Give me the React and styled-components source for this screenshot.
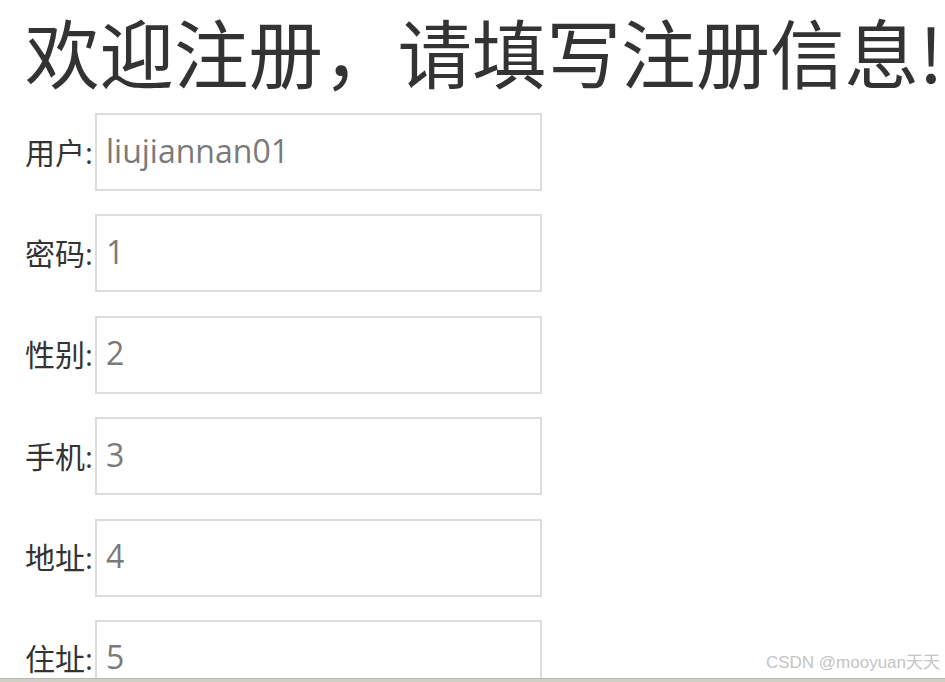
import React from "react";
import styled, { createGlobalStyle } from "styled-components";

const Global = createGlobalStyle`
  html, body { margin: 0; padding: 0; background: #fff; overflow: hidden; }
  body { font-family: "Open Sans", "Noto Sans CJK SC", sans-serif; color: #333; }
`;

const Viewport = styled.div`
  position: relative;
  width: 945px;
  height: 682px;
  overflow: hidden;
  display: flex;
  flex-direction: column;
`;

const Page = styled.div`
  flex: 1;
  overflow: hidden;
  padding-left: 25px;
`;

const Title = styled.h1`
  margin: 0;
  font-family: "Noto Sans CJK SC", sans-serif;
  font-weight: 400;
  font-size: 74.5px;
  line-height: 102px;
  white-space: nowrap;
  color: #333;
`;

const Form = styled.form`
  margin-top: 11px;
  display: flex;
  flex-direction: column;
  gap: 23.4px;
`;

const Row = styled.div`
  display: flex;
  align-items: center;
`;

const Label = styled.label`
  font-family: "Open Sans", "Noto Sans CJK SC", sans-serif;
  font-size: 30px;
  color: #333;
  width: 70px;
  margin-top: -3px;
  white-space: nowrap;
`;

const Input = styled.input`
  box-sizing: border-box;
  width: 447px;
  height: 78px;
  border: 2px solid #dcdcdc;
  padding: 0 0 4px 9px;
  font-family: "Open Sans", sans-serif;
  font-size: 32px;
  color: #7a7a7a;
  background: #fff;
  outline: none;
`;

const BottomBar = styled.div`
  height: 3px;
  background: #cfcfc8;
  border-top: 1px solid #b9b9b2;
`;

const Watermark = styled.div`
  position: absolute;
  right: 5px;
  bottom: 9px;
  font-family: "Liberation Sans", "Noto Sans CJK SC", sans-serif;
  font-size: 17px;
  color: #c4c4c4;
`;

const fields = [
  ["用户", "liujiannan01"],
  ["密码", "1"],
  ["性别", "2"],
  ["手机", "3"],
  ["地址", "4"],
  ["住址", "5"],
];

export default function App() {
  return (
    <Viewport>
      <Global />
      <Page>
        <Title>欢迎注册，请填写注册信息!</Title>
        <Form>
          {fields.map(([l, v]) => (
            <Row key={l}>
              <Label>{l}:</Label>
              <Input defaultValue={v} />
            </Row>
          ))}
        </Form>
      </Page>
      <BottomBar />
      <Watermark>CSDN @mooyuan天天</Watermark>
    </Viewport>
  );
}
